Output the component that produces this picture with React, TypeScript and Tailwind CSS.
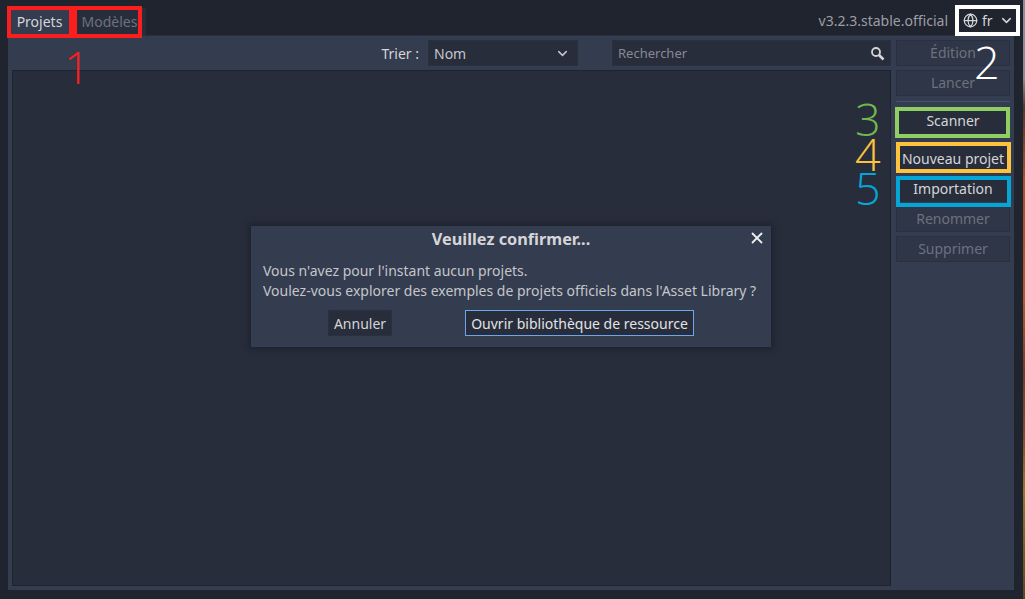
/**
 * Project manager window with the numbered annotations over it.
 */
import { Globe, ChevronDown, X } from 'lucide-react';

const FONT = "font-['Noto_Sans',sans-serif]";

function SideButton({ label, disabled, className = '' }: { label: string; disabled?: boolean; className?: string }) {
  return (
    <div
      className={`flex h-[26px] shrink-0 items-center justify-center border border-[#2a3040] text-[14px] leading-none ${
        disabled ? 'bg-[#2f3648] text-[#6d717c]' : 'bg-[#282d3c] text-[#d4d5d8]'
      } ${className}`}
    >
      {label}
    </div>
  );
}

function Mark({ className }: { className: string }) {
  return <div className={`pointer-events-none absolute border-[4px] ${className}`} />;
}

function Num({ children, className }: { children: string; className: string }) {
  return (
    <span className={`pointer-events-none absolute font-['Open_Sans',sans-serif] text-[45px] leading-[32px] font-[350] ${className}`}>
      {children}
    </span>
  );
}

function SearchIcon() {
  return (
    <svg width="15" height="15" viewBox="0 0 15 15" fill="none" stroke="#d4d5d8" className="shrink-0">
      <circle cx="6" cy="6" r="4" strokeWidth="1.8" />
      <path d="M9 9l4.5 4.5" strokeWidth="2.6" />
    </svg>
  );
}

export default function App() {
  return (
    <div className={`relative flex h-[599px] w-[1025px] overflow-hidden bg-[#20242f] ${FONT} text-[14px] text-[#d4d5d8]`}>
      <div className="flex h-full w-[1023px] shrink-0 flex-col pr-[9px] pb-[9px] pl-[8px]">
        {/* Top bar */}
        <div className="mt-[8px] flex h-[27px] shrink-0 items-stretch">
          <div className="flex w-[63px] items-center justify-center bg-[#343c4f] text-[#d4d5d8]">Projets</div>
          <div className="ml-[2px] flex w-[73px] items-center justify-center bg-[#282d3c] text-[#6d717c]">Modèles</div>
          <div className="flex-1" />
          <div className="flex items-center pr-[9px] pb-[2px] text-[#9c9ea6]">v3.2.3.stable.official</div>
          <div className="flex w-[57px] items-center gap-[4px] pb-[2px] pl-[6px] text-[#d4d5d8]">
            <Globe size={15} strokeWidth={2} />
            <span>fr</span>
            <ChevronDown size={15} strokeWidth={2.4} className="ml-[2px]" />
          </div>
        </div>

        {/* Main panel */}
        <div className="flex min-h-0 flex-1 border-t border-[#2a3040] bg-[#343c4f] pr-[4px] pb-[4px] pl-[4px]">
          <div className="flex min-w-0 flex-1 flex-col">
            <div className="flex h-[34px] shrink-0 items-center justify-end">
              <span className="mr-[9px] text-[#d4d5d8]">Trier :</span>
              <div className="flex h-[26px] w-[150px] items-center justify-between border border-[#2a3040] bg-[#282d3c] pr-[7px] pl-[5px] text-[#c4c6cb]">
                <span>Nom</span>
                <ChevronDown size={15} strokeWidth={2.4} className="text-[#c4c6cb]" />
              </div>
              <div className="ml-[34px] flex h-[26px] w-[279px] items-center justify-between border border-[#2a3040] bg-[#282d3c] pr-[5px] pl-[5px] text-[13px] text-[#868994]">
                <span className="mt-[2px]">Rechercher</span>
                <SearchIcon />
              </div>
            </div>
            <div className="min-h-0 flex-1 border border-[#1f2330] bg-[#282d3c]" />
          </div>

          {/* Side buttons */}
          <div className="ml-[5px] flex w-[114px] shrink-0 flex-col pt-[4px]">
            <SideButton label="Édition" disabled />
            <SideButton label="Lancer" disabled className="mt-[4px]" />
            <div className="mt-[5px] h-px shrink-0 bg-[#46506a]" />
            <SideButton label="Scanner" className="mt-[6px]" />
            <SideButton label="Nouveau projet" className="mt-[12px]" />
            <SideButton label="Importation" className="mt-[4px]" />
            <SideButton label="Renommer" disabled className="mt-[4px]" />
            <SideButton label="Supprimer" disabled className="mt-[4px]" />
          </div>
        </div>
      </div>

      {/* Sliver of the desktop wallpaper behind the window */}
      <div className="h-full flex-1 bg-[linear-gradient(to_bottom,#8a8d92_0%,#8a8d92_13%,#4a3c34_18%,#a8502a_30%,#b4582c_50%,#6d4029_62%,#7a4a2c_72%,#8f7a26_82%,#55491f_100%)]" />

      {/* Confirm dialog */}
      <div className="absolute top-[226px] left-[251px] flex h-[121px] w-[520px] flex-col bg-[#343c4f] shadow-[0_0_6px_2px_rgba(20,23,32,0.55)]">
        <div className="relative h-[29px] pt-[1px] text-center text-[16.3px] font-bold text-[#d4d5d8]">
          Veuillez confirmer...
          <X size={18} strokeWidth={2.4} className="absolute top-[3px] right-[5px] text-[#eceded]" />
        </div>
        <div className="mt-[6px] px-[12px] text-[14px] leading-[20px] text-[#c4c6cb]">
          <p>Vous n&apos;avez pour l&apos;instant aucun projets.</p>
          <p>Voulez-vous explorer des exemples de projets officiels dans l&apos;Asset Library ?</p>
        </div>
        <div className="mt-[9px] flex pl-[77px]">
          <div className="flex h-[26px] w-[64px] items-center justify-center border border-[#2a3040] bg-[#282d3c]">Annuler</div>
          <div className="ml-[73px] flex h-[26px] w-[229px] items-center justify-center border border-[#6fa4ee] bg-[#282d3c] text-[#e2e3e5]">
            Ouvrir bibliothèque de ressource
          </div>
        </div>
      </div>

      {/* Annotations */}
      <Mark className="top-[6px] left-[7px] h-[32px] w-[66px] border-[#fb1e1e]" />
      <Mark className="top-[6px] left-[73px] h-[32px] w-[69px] border-[#fb1e1e]" />
      <Mark className="top-[5px] left-[955px] h-[31px] w-[65px] border-[#ffffff]" />
      <Mark className="top-[107px] left-[895px] h-[31px] w-[115px] border-[#8fce63]" />
      <Mark className="top-[142px] left-[896px] h-[31px] w-[115px] border-[#fdc33e]" />
      <Mark className="top-[176px] left-[896px] h-[31px] w-[115px] border-[#05a5d6]" />
      <Num className="top-[51px] left-[64px] text-[#fb1e1e]">1</Num>
      <Num className="top-[46px] left-[974px] text-[#ffffff]">2</Num>
      <Num className="top-[103px] left-[855px] text-[#6eb84e]">3</Num>
      <Num className="top-[138px] left-[855px] text-[#fdc33e]">4</Num>
      <Num className="top-[172px] left-[855px] text-[#05a5d6]">5</Num>
    </div>
  );
}
